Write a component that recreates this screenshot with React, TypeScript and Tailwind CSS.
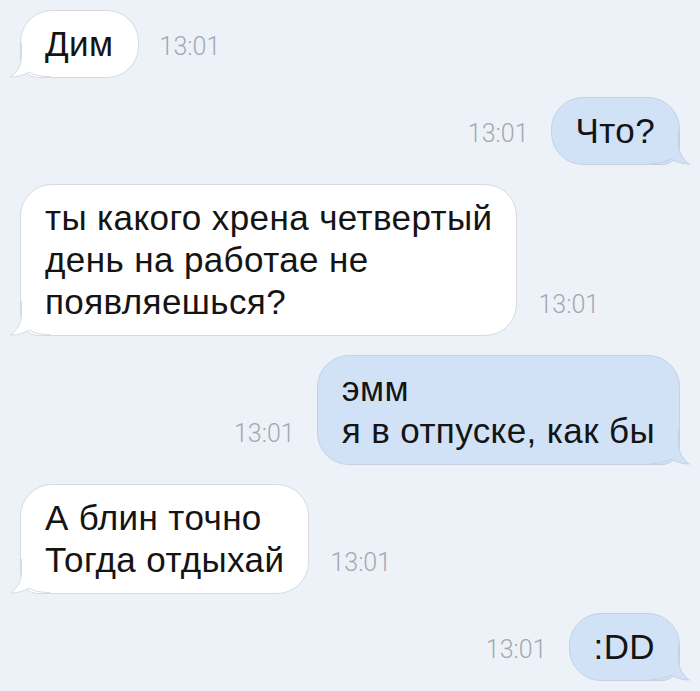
const Tail = ({ side, fill, stroke }: { side: "left" | "right"; fill: string; stroke: string }) => (
  <svg
    width="40"
    height="35"
    viewBox="0 0 40 35"
    className={side === "left" ? "absolute left-[-11px] bottom-[-1px]" : "absolute right-[-11px] bottom-[-1px] -scale-x-100"}
  >
    <path d="M11 0 L11 13 C11 24 6 30 0.5 34 C8 34 14 32 19 29 C24 32 30 33.5 40 33.5 L40 0 Z" fill={fill} />
    <path
      d="M11.5 0 L11.5 13 C11.5 24 6 30 0.5 34 C8 34 14 32 19 29 C24 32 30 33.5 40 33.5"
      fill="none"
      stroke={stroke}
      strokeWidth="1"
    />
  </svg>
);

const Time = () => (
  <span className="mb-[19px] text-[25px] leading-none font-light text-[#a3a8b0] font-['Roboto','Liberation_Sans',sans-serif] shrink-0">
    13:01
  </span>
);

const Incoming = ({ lines }: { lines: string[] }) => (
  <div className="flex items-end gap-[21px]">
    <div className="relative bg-white border border-[#d6dbe3] rounded-[32px] rounded-bl-[18px] px-6 py-3">
      <Tail side="left" fill="#ffffff" stroke="#d6dbe3" />
      <p className="relative text-[35px] leading-[42px] tracking-[0.4px] text-[#141414] whitespace-nowrap">
        {lines.map((l, i) => (
          <span key={i} className="block">{l}</span>
        ))}
      </p>
    </div>
    <Time />
  </div>
);

const Outgoing = ({ lines }: { lines: string[] }) => (
  <div className="flex items-end justify-end gap-[22px]">
    <Time />
    <div className="relative bg-[#d1e2f6] border border-[#c3d1e3] rounded-[32px] rounded-br-[18px] px-6 py-3">
      <Tail side="right" fill="#d1e2f6" stroke="#c3d1e3" />
      <p className="relative text-[35px] leading-[42px] tracking-[0.4px] text-[#141414] whitespace-nowrap">
        {lines.map((l, i) => (
          <span key={i} className="block">{l}</span>
        ))}
      </p>
    </div>
  </div>
);

export default function App() {
  return (
    <div className="w-[700px] h-[691px] overflow-hidden bg-[#edf2f9] font-['Liberation_Sans',Arial,sans-serif] pt-[10px] pl-5 pr-5 flex flex-col gap-[19px]">
      <Incoming lines={["Дим"]} />
      <Outgoing lines={["Что?"]} />
      <Incoming lines={["ты какого хрена четвертый", "день на работае не", "появляешься?"]} />
      <Outgoing lines={["эмм", "я в отпуске, как бы"]} />
      <Incoming lines={["А блин точно", "Тогда отдыхай"]} />
      <Outgoing lines={[":DD"]} />
    </div>
  );
}
